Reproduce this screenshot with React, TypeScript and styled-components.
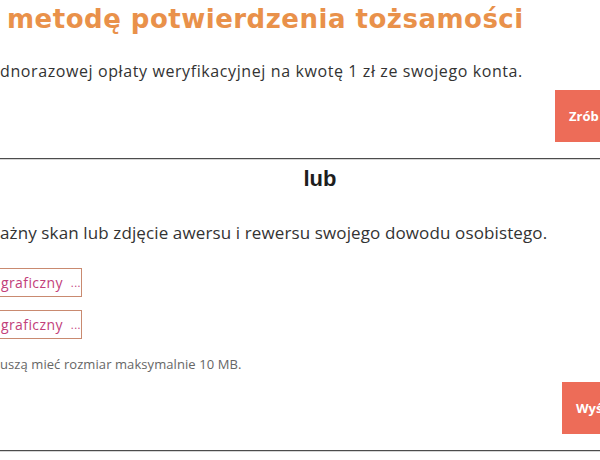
import styled, { createGlobalStyle } from "styled-components";

const GlobalStyle = createGlobalStyle`
  html, body {
    margin: 0;
    padding: 0;
    background: #fff;
    overflow: hidden;
  }
  body {
    font-family: "Open Sans", "DejaVu Sans", sans-serif;
    color: #333;
  }
`;

const Page = styled.div`
  width: 640px;
`;

const Title = styled.h1`
  margin: 0;
  padding: 2px 0 0 7px;
  font-family: "DejaVu Sans", "Open Sans", sans-serif;
  font-size: 26px;
  line-height: 34px;
  font-weight: 700;
  letter-spacing: 0.5px;
  color: #e9914a;
  white-space: nowrap;
`;

const Lead = styled.p`
  margin: 24px 0 0;
  font-size: 16px;
  line-height: 22px;
  letter-spacing: 0.6px;
  white-space: nowrap;
`;

const Intro = styled.p`
  margin: 0;
  font-size: 17px;
  line-height: 24px;
  letter-spacing: 0.12px;
  white-space: nowrap;
`;

const Note = styled.p`
  margin: 16px 0 0;
  font-size: 13px;
  line-height: 18px;
  letter-spacing: 0.08px;
  color: #666;
  white-space: nowrap;
`;

const Actions = styled.div<{ $top: number }>`
  display: flex;
  justify-content: flex-end;
  margin-top: ${(p) => p.$top}px;
`;

const Button = styled.button<{ $width: number }>`
  width: ${(p) => p.$width}px;
  height: 52px;
  padding: 0 0 0 14px;
  border: none;
  background: #ed6c58;
  color: #fff;
  font-family: "Open Sans", sans-serif;
  font-size: 13px;
  font-weight: 700;
  text-align: left;
  white-space: nowrap;
  overflow: hidden;
`;

const Divider = styled.hr`
  margin: 16px 0 0;
  border: none;
  border-top: 1px solid #4c4c4c;
  border-bottom: 1px solid #d6d6d6;
`;

const Or = styled.h2`
  margin: 6px 0 29px;
  text-align: center;
  font-family: "Liberation Sans", Arial, sans-serif;
  font-size: 22px;
  line-height: 26px;
  font-weight: 700;
  color: #1e1e1e;
`;

const Files = styled.div`
  display: flex;
  flex-direction: column;
  align-items: flex-start;
  gap: 13px;
  margin-top: 23px;
`;

const FileField = styled.label`
  display: inline-flex;
  align-items: center;
  box-sizing: border-box;
  width: 92px;
  height: 29px;
  margin-left: -10px;
  padding-left: 10px;
  border: 1px solid #c98a70;
  color: #c2407a;
  font-size: 14px;
  letter-spacing: 0.4px;
  white-space: nowrap;
`;

const Dots = styled.span`
  margin-left: 8px;
  font-size: 11px;
  letter-spacing: 0.5px;
`;

export default function App() {
  return (
    <Page>
      <GlobalStyle />
      <Title>metodę potwierdzenia tożsamości</Title>
      <Lead>dnorazowej opłaty weryfikacyjnej na kwotę 1 zł ze swojego konta.</Lead>
      <Actions $top={8}>
        <Button $width={85}>Zrób przelew</Button>
      </Actions>
      <Divider />
      <Or>lub</Or>
      <Intro>ażny skan lub zdjęcie awersu i rewersu swojego dowodu osobistego.</Intro>
      <Files>
        <FileField>
          graficzny<Dots>...</Dots>
        </FileField>
        <FileField>
          graficzny<Dots>...</Dots>
        </FileField>
      </Files>
      <Note>uszą mieć rozmiar maksymalnie 10 MB.</Note>
      <Actions $top={9}>
        <Button $width={78}>Wyślij</Button>
      </Actions>
      <Divider />
    </Page>
  );
}
